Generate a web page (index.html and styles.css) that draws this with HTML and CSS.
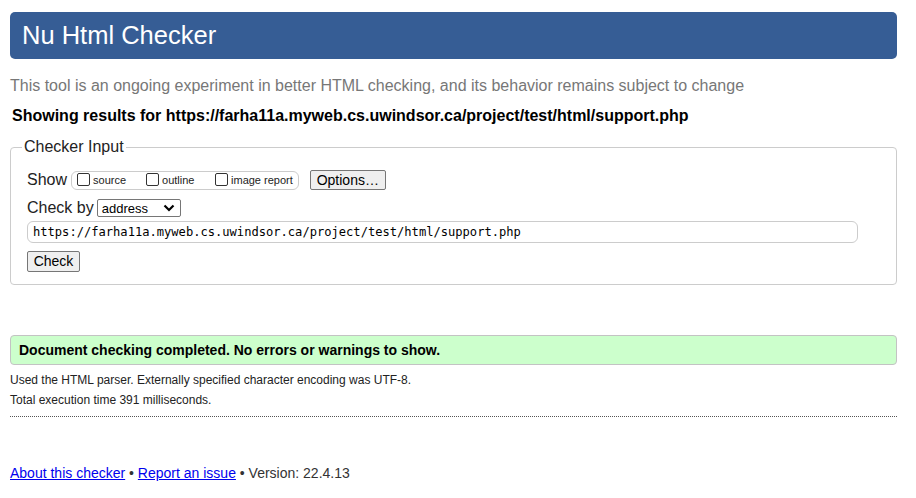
FILE: index.html
```html
<!DOCTYPE html>
<html>
<head>
<meta charset="utf-8">
<link rel="stylesheet" href="styles.css">
</head>
<body>
<div class="page">
  <h1 class="banner">Nu Html Checker</h1>
  <p class="tagline">This tool is an ongoing experiment in better HTML checking, and its behavior remains subject to change</p>
  <p class="showing">Showing results for https://farha11a.myweb.cs.uwindsor.ca/project/test/html/support.php</p>
  <fieldset class="input">
    <legend>Checker Input</legend>
    <div class="row show-row">
      <span class="lbl">Show</span>
      <span class="group">
        <label class="opt"><span class="cb"></span>source</label>
        <label class="opt"><span class="cb"></span>outline</label>
        <label class="opt"><span class="cb"></span>image report</label>
      </span>
      <span class="btn options">Options…</span>
    </div>
    <div class="row by-row">
      <span class="lbl">Check by</span>
      <span class="select">address<svg class="chev" width="12" height="8" viewBox="0 0 12 8"><path d="M1.5 1.5 L6 6 L10.5 1.5" fill="none" stroke="#000" stroke-width="2.2"/></svg></span>
    </div>
    <div class="url">https://farha11a.myweb.cs.uwindsor.ca/project/test/html/support.php</div>
    <span class="btn check">Check</span>
  </fieldset>
  <div class="success">Document checking completed. No errors or warnings to show.</div>
  <p class="details first">Used the HTML parser. Externally specified character encoding was UTF-8.</p>
  <p class="details">Total execution time 391 milliseconds.</p>
  <div class="rule"></div>
  <p class="footer"><a href="#">About this checker</a> • <a href="#">Report an issue</a> • Version: 22.4.13</p>
</div>
</body>
</html>
```
FILE: styles.css
```css
html, body { margin: 0; padding: 0; background: #fff; }
body { font-family: "Liberation Sans", Arial, sans-serif; color: #222; }
.page { padding: 12px 19px 0 10px; }
.banner {
  margin: 0;
  height: 47px;
  box-sizing: border-box;
  background: #365d95;
  color: #fff;
  border-radius: 5px;
  font-weight: normal;
  font-size: 25.5px;
  line-height: 47px;
  padding-left: 12px;
}
.tagline { margin: 17px 0 0; font-size: 16px; color: #777; line-height: 20px; }
.showing { margin: 10px 0 0 2px; font-size: 16px; font-weight: bold; color: #000; line-height: 20px; }
.input {
  margin: 12px 0 0;
  border: 1px solid #ccc;
  border-radius: 4px;
  padding: 0 0 12px 16px;
  min-width: 0;
}
.input legend { font-size: 16px; padding: 0 2px; margin-left: -5px; color: #222; line-height: 18px; }
.row { display: flex; align-items: center; }
.show-row { margin-top: 14px; height: 20px; }
.lbl { font-size: 16px; }
.group {
  display: inline-flex;
  align-items: center;
  border: 1px solid #ccc;
  border-radius: 6px;
  margin-left: 4px;
  height: 17px;
  padding: 0 5px 0 5px;
  gap: 7px;
}
.opt { display: inline-flex; align-items: center; font-size: 11px; width: 62px; }
.opt:last-child { width: auto; }
.cb {
  display: inline-block;
  width: 11px; height: 11px;
  border: 1px solid #333;
  border-radius: 2px;
  margin-right: 3px;
  position: relative; top: -1px;
}
.btn {
  display: inline-block;
  box-sizing: border-box;
  border: 1px solid #767676;
  background: #efefef;
  border-radius: 2px;
  font-size: 14px;
  color: #000;
  line-height: 18px;
  text-align: center;
}
.options { margin-left: 11px; width: 76px; height: 20px; }
.by-row { margin-top: 9px; height: 18px; }
.select {
  display: inline-flex;
  align-items: center;
  justify-content: space-between;
  box-sizing: border-box;
  margin-left: 3px;
  width: 84px; height: 18px;
  border: 1px solid #767676;
  border-radius: 2px;
  font-size: 13px;
  padding: 0 5px 0 4px;
  color: #000;
}
.url {
  margin: 4px 38px 0 0;
  height: 22px;
  box-sizing: border-box;
  border: 1px solid #ccc;
  border-radius: 6px;
  font-family: "DejaVu Sans Mono", "Liberation Mono", monospace;
  font-size: 12.1px;
  line-height: 20px;
  padding-left: 5px;
  color: #000;
}
.check { margin-top: 8px; width: 53px; height: 21px; font-size: 14px; }
.success {
  margin-top: 50px;
  height: 30px;
  box-sizing: border-box;
  background: #ccffcc;
  border: 1px solid #c3c3c3;
  border-radius: 4px;
  font-size: 14px;
  font-weight: bold;
  color: #000;
  line-height: 28px;
  padding-left: 8px;
}
.details { margin: 0; font-size: 12px; line-height: 20px; color: #222; }
.details.first { margin-top: 5px; }
.rule { border-top: 1px dotted #555; margin-top: 6px; }
.footer { margin: 48px 0 0; font-size: 14px; color: #333; }
.footer a { color: #00e; }
```
